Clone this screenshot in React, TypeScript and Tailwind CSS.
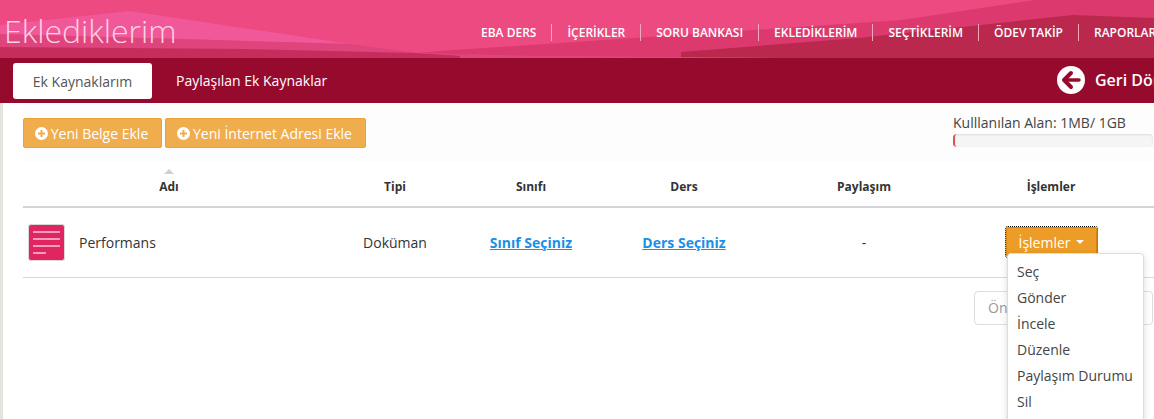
import { Fragment } from 'react';

const font = { sans: "font-['Open_Sans',sans-serif]" };

const navItems = ['EBA DERS', 'İÇERİKLER', 'SORU BANKASI', 'EKLEDİKLERİM', 'SEÇTİKLERİM', 'ÖDEV TAKİP', 'RAPORLAR'];
const menuItems = ['Seç', 'Gönder', 'İncele', 'Düzenle', 'Paylaşım Durumu', 'Sil'];
const gridCols = 'grid grid-cols-[292px_160px_112px_194px_166px_208px]';

function HeaderArt() {
  return (
    <svg className="absolute inset-0" width="1154" height="58" viewBox="0 0 1154 58" aria-hidden="true">
      <polygon points="0,25 130,11 350,44 180,39 0,34" fill="#f0589a" />
      <polygon points="0,34 180,39 350,44 417,53 0,47" fill="#e0447c" />
      <polygon points="0,47 245,49 417,53 500,58 0,58" fill="#c72d5c" />
      <polygon points="417,53 600,58 500,58" fill="#e0447c" />
      <polygon points="440,51 902,20 1035,0 1154,0 1154,58 600,58 417,53" fill="#dc3a6e" />
      <polygon points="681,52 858,38 1073,15 1154,18 1154,58 681,58" fill="#ba284e" />
      <polygon points="460,55 780,58 460,58" fill="#e0447c" />
    </svg>
  );
}

function PlusIcon() {
  return (
    <svg width="13" height="13" viewBox="0 0 13 13" aria-hidden="true">
      <circle cx="6.5" cy="6.5" r="6.5" fill="#fff" />
      <rect x="3" y="5.5" width="7" height="2" fill="#f0ad4e" />
      <rect x="5.5" y="3" width="2" height="7" fill="#f0ad4e" />
    </svg>
  );
}

function BackIcon() {
  return (
    <svg width="28" height="28" viewBox="0 0 28 28" aria-hidden="true">
      <circle cx="14" cy="14" r="14" fill="#fff" />
      <path d="M14 7 L7 14 L14 21" fill="none" stroke="#960a2d" strokeWidth="4" strokeLinecap="round" strokeLinejoin="round" />
      <path d="M8 14 H22" fill="none" stroke="#960a2d" strokeWidth="3.5" strokeLinecap="round" />
    </svg>
  );
}

function DocIcon() {
  return (
    <div className="w-[37px] h-[37px] rounded-[3px] bg-[#e12561] border border-[#d8d8d8] flex flex-col gap-[5px] pl-[4px] pt-[6px] shrink-0">
      <div className="h-[2px] w-[27px] bg-[#f4a0bd]" />
      <div className="h-[2px] w-[27px] bg-[#f4a0bd]" />
      <div className="h-[2px] w-[27px] bg-[#f4a0bd]" />
      <div className="h-[2px] w-[13px] bg-[#f4a0bd]" />
    </div>
  );
}

function AddButton({ label, width }: { label: string; width: string }) {
  return (
    <button className={`${width} h-[30px] flex items-center justify-center gap-[3px] pr-[2px] rounded-[2px] border border-[#eea236] bg-[#f0ad4e] text-white text-[14px]`}>
      <PlusIcon />
      {label}
    </button>
  );
}

export default function App() {
  return (
    <div className={`${font.sans} relative w-[1154px] h-[419px] overflow-hidden bg-white text-[#333]`}>
      <header className="relative h-[58px] bg-[#ec4a80] flex items-center">
        <HeaderArt />
        <h1 className="relative ml-[4px] mt-[3px] text-[32px] font-light text-[#fbd3e2] leading-none whitespace-nowrap">
          Eklediklerim
        </h1>
        <nav className="absolute left-[466px] top-[24px] flex items-center whitespace-nowrap">
          {navItems.map((item, i) => (
            <Fragment key={item}>
              {i > 0 && <span className="w-px h-[17px] bg-[#f6a6c0]" />}
              <a className="px-[15px] text-[12px] font-semibold text-white leading-[17px]">{item}</a>
            </Fragment>
          ))}
        </nav>
      </header>

      <div className="h-[45px] bg-[#960a2d] flex items-center pl-[13px] relative">
        <div className="w-[139px] h-[36px] mt-[1px] rounded-[3px] bg-white text-[#555] text-[14px] flex items-center justify-center">
          Ek Kaynaklarım
        </div>
        <div className="ml-[24px] text-[14px] text-white">Paylaşılan Ek Kaynaklar</div>
        <div className="absolute left-[1057px] top-[8px] flex items-center gap-[10px] whitespace-nowrap">
          <BackIcon />
          <span className="text-[16px] font-semibold text-white">Geri Dön</span>
        </div>
      </div>

      <main className="border-l-[3px] border-[#e5e3dd] h-[316px] pl-[20px]">
        <div className="flex justify-between h-[59px] bg-[#fdfdfd]">
          <div className="flex gap-[3px] pt-[15px]">
            <AddButton label="Yeni Belge Ekle" width="w-[139px]" />
            <AddButton label="Yeni İnternet Adresi Ekle" width="w-[201px]" />
          </div>
          <div className="w-[201px] pt-[10px]">
            <div className="text-[14px] leading-[20px] text-[#444]">Kulllanılan Alan: 1MB/ 1GB</div>
            <div className="mt-[1px] h-[13px] w-[200px] rounded-[4px] bg-[#f5f5f5] border-l-2 border-[#d9534f] shadow-[inset_0_1px_2px_rgba(0,0,0,0.1)]" />
          </div>
        </div>

        <div className={`${gridCols} h-[46px] border-b-2 border-[#d4d4d4] text-[12px] font-bold text-center text-[#333] items-end pb-[10px]`}>
          <div className="relative">
            <span className="absolute left-1/2 -translate-x-1/2 -top-[9px] w-0 h-0 border-x-[5px] border-x-transparent border-b-[5px] border-b-[#d0d0d0]" />
            Adı
          </div>
          <div>Tipi</div>
          <div>Sınıfı</div>
          <div>Ders</div>
          <div>Paylaşım</div>
          <div>İşlemler</div>
        </div>

        <div className={`${gridCols} h-[70px] border-b border-[#d9d9d9] items-center text-center text-[14px]`}>
          <div className="flex items-center pl-[5px] gap-[14px] text-left">
            <DocIcon />
            Performans
          </div>
          <div>Doküman</div>
          <a className="font-bold text-[#1a8fe8] underline">Sınıf Seçiniz</a>
          <a className="font-bold text-[#1a8fe8] underline">Ders Seçiniz</a>
          <div>-</div>
          <div className="flex justify-center pb-[1px]">
            <button className="w-[91px] h-[30px] flex items-center justify-center gap-[5px] rounded-[2px] bg-[#ec9c27] border border-[#d58512] outline-1 outline-dotted outline-black text-white text-[14px]">
              İşlemler
              <span className="w-0 h-0 border-x-[4px] border-x-transparent border-t-[4px] border-t-white" />
            </button>
          </div>
        </div>

        <div className="flex justify-end pt-[13px]">
          <div className="w-[179px] h-[34px] mr-[1px] rounded-[4px] border border-[#ddd] pl-[13px] text-[14px] leading-[32px] text-[#999]">
            Önceki
          </div>
        </div>
      </main>

      <ul className="absolute left-[1007px] top-[253px] w-[137px] h-[175px] rounded-[4px] border border-[#ddd] bg-white shadow-[0_2px_6px_rgba(0,0,0,0.15)] pt-[5px] text-[14px] text-[#444]">
        {menuItems.map((item) => (
          <li key={item} className="h-[26px] pl-[9px] leading-[26px] whitespace-nowrap">
            {item}
          </li>
        ))}
      </ul>
    </div>
  );
}
